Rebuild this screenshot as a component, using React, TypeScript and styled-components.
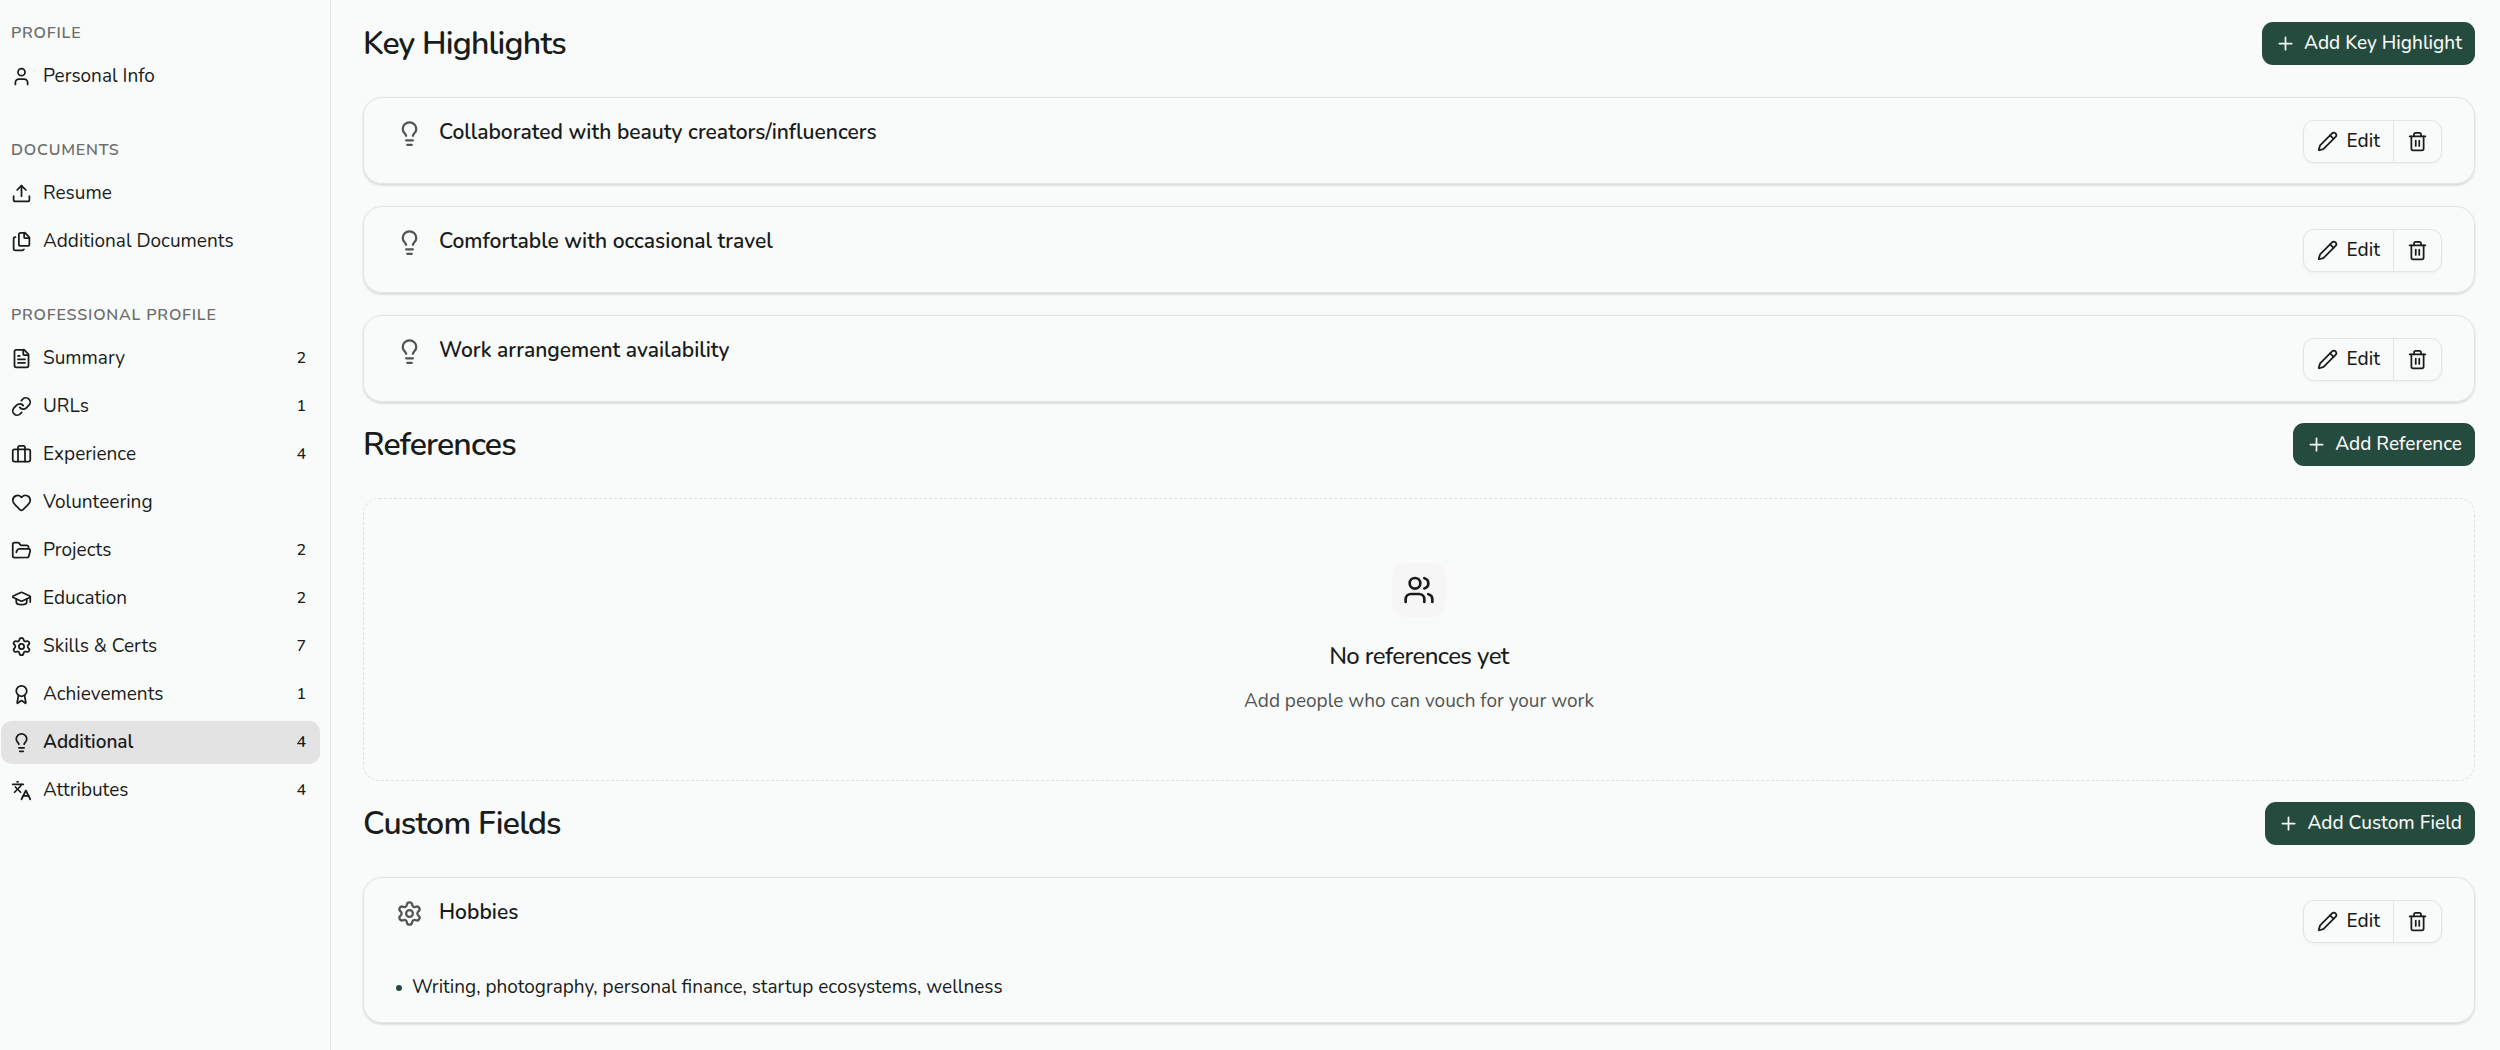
import React from "react";
import styled, { createGlobalStyle } from "styled-components";
import {
  User, Upload, Files, FileText, Link, Briefcase, Heart, FolderOpen, GraduationCap,
  Settings, Award, Lightbulb, Languages, Plus, Pencil, Trash2, Users, LucideIcon,
} from "lucide-react";

const GlobalStyle = createGlobalStyle`
  *, *::before, *::after { box-sizing: border-box; }
  body {
    margin: 0;
    background: #f9fbfa;
    color: #191c1b;
    font-family: Nunito, Lato, "Open Sans", sans-serif;
    font-size: 19px;
    line-height: 29px;
  }
  h1, h2, h3, p, ul { margin: 0; padding: 0; }
  ul { list-style: none; }
  button { font: inherit; color: inherit; cursor: pointer; }
`;

const Page = styled.div`
  display: flex;
  min-height: 100vh;
`;

const Sidebar = styled.nav`
  flex: 0 0 331px;
  display: flex;
  flex-direction: column;
  gap: 31px;
  padding: 12px 10px 12px 1px;
  border-right: 1px solid #e2e4e3;
`;

const GroupTitle = styled.h3`
  padding: 8px 10px;
  font-size: 16px;
  font-weight: 600;
  line-height: 27px;
  letter-spacing: 0.05em;
  text-transform: uppercase;
  color: #6b6e6d;
`;

const NavList = styled.ul`
  display: flex;
  flex-direction: column;
  gap: 5px;
`;

const NavLink = styled.a<{ $active?: boolean }>`
  display: flex;
  align-items: center;
  gap: 11px;
  height: 43px;
  padding: 0 14px 0 10px;
  border-radius: 11px;
  background: ${(p) => (p.$active ? "#e3e3e3" : "transparent")};
  font-weight: ${(p) => (p.$active ? 600 : 400)};
  color: inherit;
  text-decoration: none;
`;

const NavLabel = styled.span`
  flex: 1;
`;

const Count = styled.span<{ $active?: boolean }>`
  font-size: 16px;
  font-weight: ${(p) => (p.$active ? 600 : 500)};
`;

const Main = styled.main`
  flex: 1;
  min-width: 0;
  display: flex;
  flex-direction: column;
  gap: 21px;
  padding: 22px 25px 25px 32px;
`;

const Section = styled.section`
  display: flex;
  flex-direction: column;
  gap: 32px;
`;

const SectionHeader = styled.header`
  display: flex;
  align-items: center;
  justify-content: space-between;
`;

const SectionTitle = styled.h2`
  font-size: 32px;
  font-weight: 600;
  line-height: 43px;
  letter-spacing: -0.025em;
`;

const AddButton = styled.button`
  display: flex;
  align-items: center;
  gap: 8px;
  height: 43px;
  padding: 0 13px;
  border: 0;
  border-radius: 11px;
  background: #254b3e;
  color: #f7f7f7;
  font-weight: 500;
`;

const CardList = styled.div`
  display: flex;
  flex-direction: column;
  gap: 22px;
`;

const Card = styled.article`
  display: flex;
  flex-direction: column;
  gap: 30px;
  padding: 22px 32px 20px;
  border: 1px solid #e2e4e3;
  border-radius: 19px;
  box-shadow: 0 1px 3px rgba(0, 0, 0, 0.1), 0 2px 2px rgba(0, 0, 0, 0.06);
`;

const CardHead = styled.div`
  display: flex;
  align-items: flex-start;
  gap: 16px;
`;

const CardIcon = styled.span`
  display: flex;
  color: #515453;
`;

const CardTitle = styled.h3`
  flex: 1;
  font-size: 21px;
  font-weight: 600;
  line-height: 25px;
`;

const Actions = styled.div`
  display: flex;
  height: 43px;
  border: 1px solid #e2e4e3;
  border-radius: 11px;
  box-shadow: 0 1px 3px rgba(0, 0, 0, 0.05);
`;

const ActionButton = styled.button`
  display: flex;
  align-items: center;
  gap: 8px;
  padding: 0 13px;
  border: 0;
  background: transparent;
  font-weight: 500;

  & + & {
    border-left: 1px solid #e2e4e3;
  }
`;

const Bullet = styled.li`
  display: flex;
  align-items: center;
  gap: 10px;

  &::before {
    content: "";
    width: 6px;
    height: 6px;
    border-radius: 50%;
    background: #254b3e;
  }
`;

const Empty = styled.div`
  display: flex;
  flex-direction: column;
  align-items: center;
  padding: 64px 32px;
  border: 1px dashed #dfe1e0;
  border-radius: 16px;
`;

const EmptyIcon = styled.span`
  display: flex;
  padding: 11px;
  border-radius: 13px;
  background: #f6f6f6;
`;

const EmptyTitle = styled.h3`
  margin-top: 21px;
  font-size: 24px;
  font-weight: 500;
  line-height: 37px;
  letter-spacing: -0.025em;
`;

const EmptyText = styled.p`
  margin-top: 12px;
  color: #515453;
`;

type NavEntry = { icon: LucideIcon; label: string; count?: number; active?: boolean };

const groups: { title: string; items: NavEntry[] }[] = [
  { title: "Profile", items: [{ icon: User, label: "Personal Info" }] },
  {
    title: "Documents",
    items: [
      { icon: Upload, label: "Resume" },
      { icon: Files, label: "Additional Documents" },
    ],
  },
  {
    title: "Professional Profile",
    items: [
      { icon: FileText, label: "Summary", count: 2 },
      { icon: Link, label: "URLs", count: 1 },
      { icon: Briefcase, label: "Experience", count: 4 },
      { icon: Heart, label: "Volunteering" },
      { icon: FolderOpen, label: "Projects", count: 2 },
      { icon: GraduationCap, label: "Education", count: 2 },
      { icon: Settings, label: "Skills & Certs", count: 7 },
      { icon: Award, label: "Achievements", count: 1 },
      { icon: Lightbulb, label: "Additional", count: 4, active: true },
      { icon: Languages, label: "Attributes", count: 4 },
    ],
  },
];

const highlights = [
  "Collaborated with beauty creators/influencers",
  "Comfortable with occasional travel",
  "Work arrangement availability",
];

function Header({ title, action }: { title: string; action: string }) {
  return (
    <SectionHeader>
      <SectionTitle>{title}</SectionTitle>
      <AddButton type="button">
        <Plus size={21} />
        {action}
      </AddButton>
    </SectionHeader>
  );
}

function Item({ icon: Icon, title, children }: { icon: LucideIcon; title: string; children?: React.ReactNode }) {
  return (
    <Card>
      <CardHead>
        <CardIcon><Icon size={27} /></CardIcon>
        <CardTitle>{title}</CardTitle>
        <Actions>
          <ActionButton type="button"><Pencil size={21} />Edit</ActionButton>
          <ActionButton type="button" aria-label="Delete"><Trash2 size={21} /></ActionButton>
        </Actions>
      </CardHead>
      {children}
    </Card>
  );
}

export default function App() {
  return (
    <Page>
      <GlobalStyle />
      <Sidebar>
        {groups.map((group) => (
          <div key={group.title}>
            <GroupTitle>{group.title}</GroupTitle>
            <NavList>
              {group.items.map(({ icon: Icon, label, count, active }) => (
                <li key={label}>
                  <NavLink href="#" $active={active}>
                    <Icon size={21} />
                    <NavLabel>{label}</NavLabel>
                    {count !== undefined && <Count $active={active}>{count}</Count>}
                  </NavLink>
                </li>
              ))}
            </NavList>
          </div>
        ))}
      </Sidebar>
      <Main>
        <Section>
          <Header title="Key Highlights" action="Add Key Highlight" />
          <CardList>
            {highlights.map((title) => (
              <Item key={title} icon={Lightbulb} title={title} />
            ))}
          </CardList>
        </Section>
        <Section>
          <Header title="References" action="Add Reference" />
          <Empty>
            <EmptyIcon><Users size={32} /></EmptyIcon>
            <EmptyTitle>No references yet</EmptyTitle>
            <EmptyText>Add people who can vouch for your work</EmptyText>
          </Empty>
        </Section>
        <Section>
          <Header title="Custom Fields" action="Add Custom Field" />
          <Item icon={Settings} title="Hobbies">
            <ul>
              <Bullet>Writing, photography, personal finance, startup ecosystems, wellness</Bullet>
            </ul>
          </Item>
        </Section>
      </Main>
    </Page>
  );
}
